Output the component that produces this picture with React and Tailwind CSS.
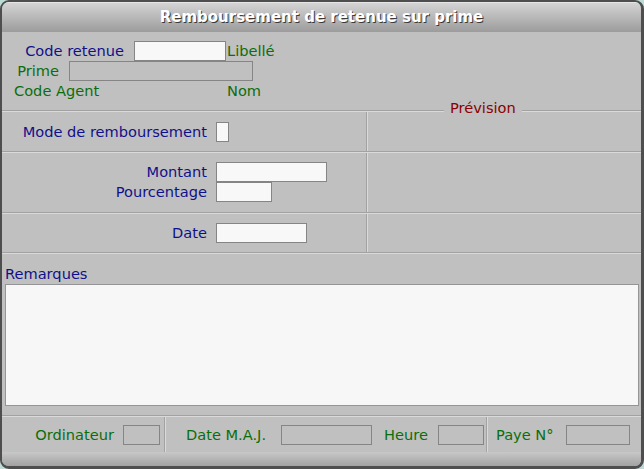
const navy = 'text-[#10108a]'
const green = 'text-[#0b6e0b]'

function Box({ w, h = 'h-[20px]', muted }) {
  return (
    <div
      className={`${w} ${h} shrink-0 border border-[#858585] ${muted ? 'bg-[#c0c0c0]' : 'bg-[#f8f8f8]'}`}
    />
  )
}

function HLine() {
  return <div className="h-[2px] shrink-0 border-t border-b border-t-[#a2a2a2] border-b-[#dadada]" />
}

function VLine() {
  return <div className="w-[2px] shrink-0 self-stretch border-l border-r border-l-[#a2a2a2] border-r-[#dadada]" />
}

function Row({ h, children, top }) {
  return (
    <div className={`flex ${h} shrink-0`}>
      <div className={`w-[364px] flex flex-col ${top ? 'justify-start' : 'justify-center'}`}>{children}</div>
      <VLine />
      <div className="flex-1" />
    </div>
  )
}

export default function App() {
  return (
    <div className="w-[644px] h-[469px] bg-[#bddcd5] font-['DejaVu_Sans',sans-serif] text-[14.6px] leading-[20px]">
      <div className="h-full flex flex-col overflow-hidden rounded-[9px] border-[#4e4e4e] border-l-2 border-t-2 border-r-[3px] border-b-[3px] bg-[#c0c0c0]">
        {/* title */}
        <div className="h-[30px] shrink-0 flex items-center justify-center bg-gradient-to-b from-[#d4d4d4] to-[#9c9c9c] border-t border-[#e6e6e6]">
          <span className="text-white font-bold text-[15px] [text-shadow:1px_1px_0_#3a3a3a] -mt-[1px]">
            Remboursement de retenue sur prime
          </span>
        </div>

        {/* header fields */}
        <div className="h-[78px] shrink-0 flex flex-col pt-[9px]">
          <div className="flex items-center h-[20px]">
            <span className={`w-[132px] text-right pr-[10px] ${navy}`}>Code retenue</span>
            <Box w="w-[92px]" />
            <span className={`ml-[1px] ${green}`}>Libellé</span>
          </div>
          <div className="flex items-center h-[20px]">
            <span className={`w-[67px] text-right pr-[10px] ${green}`}>Prime</span>
            <Box w="w-[184px]" muted />
          </div>
          <div className="flex items-center h-[20px]">
            <span className={`w-[225px] pl-[12px] ${green}`}>Code Agent</span>
            <span className={green}>Nom</span>
          </div>
        </div>

        <div className="relative">
          <HLine />
          <span className="absolute left-[442px] -top-[12px] px-[6px] bg-[#c0c0c0] text-[#8b0000]">Prévision</span>
        </div>

        <Row h="h-[39px]">
          <div className="flex items-center">
            <span className={`w-[214px] text-right pr-[9px] ${navy}`}>Mode de remboursement</span>
            <Box w="w-[13px]" />
          </div>
        </Row>
        <HLine />
        <Row h="h-[59px]" top>
          <div className="flex items-center mt-[9px]">
            <span className={`w-[214px] text-right pr-[9px] ${navy}`}>Montant</span>
            <Box w="w-[111px]" />
          </div>
          <div className="flex items-center">
            <span className={`w-[214px] text-right pr-[9px] ${navy}`}>Pourcentage</span>
            <Box w="w-[56px]" />
          </div>
        </Row>
        <HLine />
        <Row h="h-[38px]">
          <div className="flex items-center">
            <span className={`w-[214px] text-right pr-[9px] ${navy}`}>Date</span>
            <Box w="w-[91px]" />
          </div>
        </Row>
        <HLine />

        {/* remarks */}
        <div className={`mt-[10px] pl-[3px] ${navy}`}>Remarques</div>
        <div className="ml-[3px] w-[634px] h-[122px] shrink-0 border border-[#959595] bg-[#f7f7f7]" />

        <div className="mt-[9px]">
          <HLine />
        </div>

        {/* footer fields */}
        <div className={`flex h-[35px] shrink-0 ${green}`}>
          <div className="w-[162px] flex items-center justify-end pr-[4px] gap-[9px]">
            <span>Ordinateur</span>
            <Box w="w-[37px]" muted />
          </div>
          <VLine />
          <div className="w-[320px] flex items-center">
            <span className="w-[115px] pl-[20px]">Date M.A.J.</span>
            <Box w="w-[91px]" muted />
            <span className="w-[66px] pl-[12px]">Heure</span>
            <Box w="w-[46px]" muted />
          </div>
          <VLine />
          <div className="flex-1 flex items-center">
            <span className="w-[78px] pl-[8px]">Paye N°</span>
            <Box w="w-[64px]" muted />
          </div>
        </div>

        {/* bottom bar */}
        <div className="flex-1 bg-gradient-to-b from-[#c8c8c8] to-[#a2a2a2]" />
      </div>
    </div>
  )
}
